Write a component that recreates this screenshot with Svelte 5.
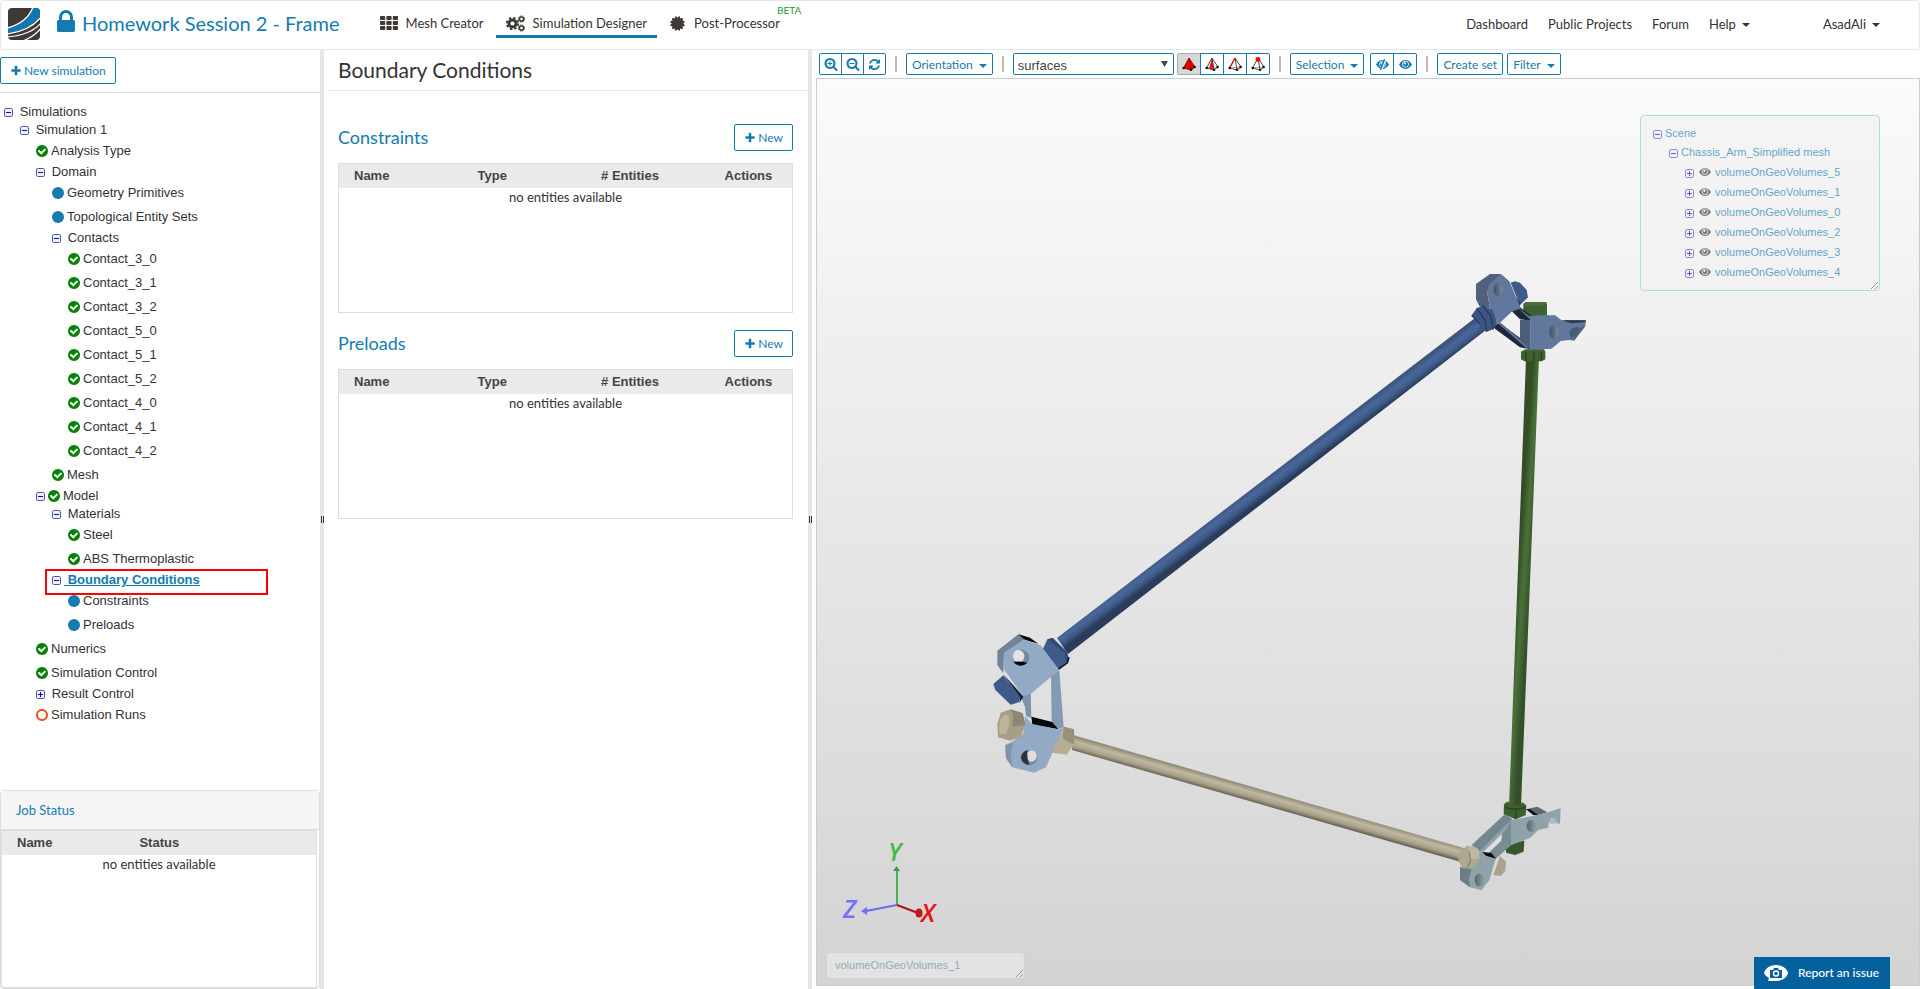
<script lang="ts">
  type Node = {
    label: string;
    toggle?: 'open' | 'closed';
    state?: 'done' | 'info' | 'pending';
    selected?: boolean;
    children?: Node[];
  };

  const done = (label: string): Node => ({ label, state: 'done' });
  const info = (label: string): Node => ({ label, state: 'info' });

  const tree: Node[] = [
    { label: 'Simulations', toggle: 'open', children: [
      { label: 'Simulation 1', toggle: 'open', children: [
        done('Analysis Type'),
        { label: 'Domain', toggle: 'open', children: [
          info('Geometry Primitives'),
          info('Topological Entity Sets'),
          { label: 'Contacts', toggle: 'open', children: [
            '3_0', '3_1', '3_2', '5_0', '5_1', '5_2', '4_0', '4_1', '4_2',
          ].map((id) => done(`Contact_${id}`)) },
          done('Mesh'),
        ] },
        { label: 'Model', toggle: 'open', state: 'done', children: [
          { label: 'Materials', toggle: 'open', children: [done('Steel'), done('ABS Thermoplastic')] },
          { label: 'Boundary Conditions', toggle: 'open', selected: true, children: [info('Constraints'), info('Preloads')] },
        ] },
        done('Numerics'),
        done('Simulation Control'),
        { label: 'Result Control', toggle: 'closed' },
        { label: 'Simulation Runs', state: 'pending' },
      ] },
    ] },
  ];

  const sections = ['Constraints', 'Preloads'];
  const volumes = [5, 1, 0, 2, 3, 4];

  let pickMode = $state('surfaces');

  // 1792-unit icon outlines
  const ICONS = {
    plus: 'M1600 736v192q0 40-28 68t-68 28h-416v416q0 40-28 68t-68 28h-192q-40 0-68-28t-28-68v-416h-416q-40 0-68-28t-28-68v-192q0-40 28-68t68-28h416v-416q0-40 28-68t68-28h192q40 0 68 28t28 68v416h416q40 0 68 28t28 68z',
    check: 'M1412 734q0-28-18-46l-91-90q-19-19-45-19t-45 19l-408 407-226-226q-19-19-45-19t-45 19l-91 90q-18 18-18 46 0 27 18 45l362 362q19 19 45 19 27 0 46-19l543-543q18-18 18-45zm252 162q0 209-103 385.5t-279.5 279.5-385.5 103-385.5-103-279.5-279.5-103-385.5 103-385.5 279.5-279.5 385.5-103 385.5 103 279.5 279.5 103 385.5z',
    lock: 'M640 768h512v-192q0-106-75-181t-181-75-181 75-75 181v192zm832 96v576q0 40-28 68t-68 28h-960q-40 0-68-28t-28-68v-576q0-40 28-68t68-28h32v-192q0-184 132-316t316-132 316 132 132 316v192h32q40 0 68 28t28 68z',
    refresh: 'M1639 1056q0 5-1 7-64 268-268 434.5t-478 166.5q-146 0-282.5-55t-243.5-157l-129 129q-19 19-45 19t-45-19-19-45v-448q0-26 19-45t45-19h448q26 0 45 19t19 45-19 45l-137 137q71 66 161 102t187 36q134 0 250-65t186-179q11-17 53-117 8-23 30-23h192q13 0 22.5 9.5t9.5 22.5zm25-800v448q0 26-19 45t-45 19h-448q-26 0-45-19t-19-45 19-45l138-138q-148-137-349-137-134 0-250 65t-186 179q-11 17-53 117-8 23-30 23h-199q-13 0-22.5-9.5t-9.5-22.5v-7q65-268 270-434.5t480-166.5q146 0 284 55.5t245 156.5l130-129q19-19 45-19t45 19 19 45z',
    zoomIn: 'M1088 800v64q0 13-9.5 22.5t-22.5 9.5h-224v224q0 13-9.5 22.5t-22.5 9.5h-64q-13 0-22.5-9.5t-9.5-22.5v-224h-224q-13 0-22.5-9.5t-9.5-22.5v-64q0-13 9.5-22.5t22.5-9.5h224v-224q0-13 9.5-22.5t22.5-9.5h64q13 0 22.5 9.5t9.5 22.5v224h224q13 0 22.5 9.5t9.5 22.5zm128 32q0-185-131.5-316.5t-316.5-131.5-316.5 131.5-131.5 316.5 131.5 316.5 316.5 131.5 316.5-131.5 131.5-316.5zm512 832q0 53-37.5 90.5t-90.5 37.5q-54 0-90-38l-343-342q-179 124-399 124-143 0-273.5-55.5t-225-150-150-225-55.5-273.5 55.5-273.5 150-225 225-150 273.5-55.5 273.5 55.5 225 150 150 225 55.5 273.5q0 220-124 399l343 343q37 37 37 90z',
    zoomOut: 'M1088 800v64q0 13-9.5 22.5t-22.5 9.5h-576q-13 0-22.5-9.5t-9.5-22.5v-64q0-13 9.5-22.5t22.5-9.5h576q13 0 22.5 9.5t9.5 22.5zm128 32q0-185-131.5-316.5t-316.5-131.5-316.5 131.5-131.5 316.5 131.5 316.5 316.5 131.5 316.5-131.5 131.5-316.5zm512 832q0 53-37.5 90.5t-90.5 37.5q-54 0-90-38l-343-342q-179 124-399 124-143 0-273.5-55.5t-225-150-150-225-55.5-273.5 55.5-273.5 150-225 225-150 273.5-55.5 273.5 55.5 225 150 150 225 55.5 273.5q0 220-124 399l343 343q37 37 37 90z',
    burst: 'M1504 896l138 135q30 28 20 70-12 41-52 51l-188 48 53 186q12 41-19 70-29 31-70 19l-186-53-48 188q-10 40-51 52-12 2-19 2-31 0-51-22l-135-138-135 138q-28 30-70 20-41-11-51-52l-48-188-186 53q-41 12-70-19-31-29-19-70l53-186-188-48q-40-10-52-51-10-42 20-70l138-135-138-135q-30-28-20-70 12-41 52-51l188-48-53-186q-12-41 19-70 29-31 70-19l186 53 48-188q10-41 51-51 41-12 70 19l135 139 135-139q29-30 70-19 41 10 51 51l48 188 186-53q41-12 70 19 31 29 19 70l-53 186 188 48q40 10 52 51 10 42-20 70z',
  };
</script>

{#snippet icon(name: keyof typeof ICONS, size: number)}
  <svg class="icon" width={size} height={size} viewBox="0 0 1792 1792" aria-hidden="true">
    <path d={ICONS[name]} />
  </svg>
{/snippet}

{#snippet eye(width: number, slashed: boolean)}
  <svg class="icon" {width} height={width} viewBox="0 0 14 14" aria-hidden="true">
    <path d="M0 7Q3 2.200 7 2.200T14 7Q11 11.800 7 11.800T0 7z" />
    <circle cx="7" cy="6.700" r="3.300" fill="none" stroke="#fff" stroke-width="0.900" />
    <circle cx="6.300" cy="5.800" r="1.100" fill="#fff" />
    {#if slashed}
      <path d="M10.500 1.500L6 13" stroke="#fff" stroke-width="1.400" />
      <path d="M9.300 1L4.800 13" stroke="currentColor" stroke-width="1.400" />
    {/if}
  </svg>
{/snippet}

{#snippet toggle(kind: string)}
  <svg class="toggle" width="9" height="9" viewBox="0 0 9 9" aria-hidden="true">
    <rect x="0.5" y="0.5" width="8" height="8" rx="1.2" fill="#f0f0f6" stroke="#4a5aae" />
    <path d={kind === 'open' ? 'M2 4.5h5' : 'M2 4.5h5M4.5 2v5'} stroke="#0a0ab0" fill="none" />
  </svg>
{/snippet}

{#snippet branch(nodes: Node[])}
  <ul>
    {#each nodes as n}
      <li>
        <div class="node" class:folder={n.toggle}>
          {#if n.toggle}{@render toggle(n.toggle)}{/if}
          {#if n.state}
            <svg class="state {n.state}" width="12" height="12" viewBox="128 128 1536 1536" aria-hidden="true">
              {#if n.state === 'done'}
                <path d={ICONS.check} />
              {:else if n.state === 'info'}
                <circle cx="896" cy="896" r="768" />
              {:else}
                <circle cx="896" cy="896" r="640" />
              {/if}
            </svg>
          {/if}
          <a href="#tree" class:selected={n.selected}>{#if n.toggle && !n.state}&nbsp;{/if}{n.label}</a>
          {#if n.selected}<span class="mark"></span>{/if}
        </div>
        {#if n.children}{@render branch(n.children)}{/if}
      </li>
    {/each}
  </ul>
{/snippet}

{#snippet caret()}
  <svg class="caret" width="8" height="4" viewBox="0 0 8 4" aria-hidden="true"><path d="M0 0h8L4 4z" /></svg>
{/snippet}

{#snippet tetra(kind: string)}
  <svg width="14" height="14" viewBox="0 0 14 14" aria-hidden="true">
    {#if kind === 'volume'}
      <path d="M7 1L1.500 11l8 2 3.500-3z" fill="#e80000" />
    {:else if kind === 'face'}
      <path d="M7 1L4 11.500l5 1.500z" fill="#f00" />
    {/if}
    <path d="M7 1L1.500 11l7.500 2 4-3zM7 1l2 12" fill="none" stroke={kind === 'volume' ? '#900' : '#333'} stroke-width="0.900" />
    {#if kind !== 'volume'}<path d="M1.500 11L13 10" stroke="#777" stroke-width="0.700" />{/if}
    {#if kind === 'edge'}<path d="M7 1L2 10.500" stroke="#e00" stroke-width="1.200" />{/if}
    {#if kind === 'vertex'}<circle cx="7" cy="2.500" r="2.400" fill="#f00" />{/if}
    <g fill="#111"><circle cx="1.700" cy="11" r="1.300" /><circle cx="9" cy="12.700" r="1.300" /><circle cx="12.600" cy="10" r="1.300" /></g>
  </svg>
{/snippet}

<div class="app">
  <header>
    <svg class="logo" width="32" height="32" viewBox="0 0 32 32" aria-hidden="true">
      <clipPath id="logo-clip"><rect width="32" height="32" rx="4" /></clipPath>
      <g clip-path="url(#logo-clip)">
        <rect width="32" height="32" fill="#3e3935" />
        <path d="M25 -1Q20 15 -1 20L-1 27Q24 21 33 7L33 -1z" fill="#1277b0" />
        <g fill="none" stroke="#fff" stroke-width="1.300">
          <path d="M25 -1Q19 15 -1 20" />
          <path d="M33 9Q22 23 -1 26" />
          <path d="M33 15Q23 27 -1 29" />
          <path d="M33 20Q27 28 15 33" />
        </g>
      </g>
    </svg>
    <span class="lock">{@render icon('lock', 28)}</span>
    <h1>Homework Session 2 - Frame</h1>
    <nav class="steps">
      <a href="#mesh">
        <svg width="18" height="14" viewBox="0 0 18 14" aria-hidden="true">
          {#each [0, 1, 2] as r}
            {#each [0, 1, 2] as c}
              <rect x={c * 6.4} y={r * 5} width="5.200" height="4" rx="0.800" />
            {/each}
          {/each}
        </svg>
        Mesh Creator
      </a>
      <a href="#designer" class="active">
        <svg width="19" height="17" viewBox="0 0 19 17" aria-hidden="true">
          <g fill="none" stroke="#3e3935">
            <circle cx="6.500" cy="8.500" r="3.600" stroke-width="3" />
            <circle cx="6.500" cy="8.500" r="5.700" stroke-width="1.800" stroke-dasharray="2.400 2.080" />
            <circle cx="15.500" cy="4" r="2.100" stroke-width="1.500" />
            <circle cx="15.500" cy="4" r="3.100" stroke-width="1" stroke-dasharray="1.400 1.035" />
            <circle cx="15.500" cy="13" r="2.100" stroke-width="1.500" />
            <circle cx="15.500" cy="13" r="3.100" stroke-width="1" stroke-dasharray="1.400 1.035" />
          </g>
        </svg>
        Simulation Designer
      </a>
      <a href="#post">
        {@render icon('burst', 17)}
        Post-Processor
        <sup>BETA</sup>
      </a>
    </nav>
    <nav class="links">
      <a href="#dashboard">Dashboard</a>
      <a href="#projects">Public Projects</a>
      <a href="#forum">Forum</a>
      <a href="#help">Help {@render caret()}</a>
      <a href="#user" class="user">AsadAli {@render caret()}</a>
    </nav>
  </header>

  <main>
    <aside>
      <div class="actions">
        <button class="btn">{@render icon('plus', 12)} New simulation</button>
      </div>
      <div class="tree">{@render branch(tree)}</div>
      <section class="jobs">
        <h2>Job Status</h2>
        <div class="grid-box">
          <table>
            <thead><tr><th>Name</th><th>Status</th></tr></thead>
            <tbody><tr><td colspan="2">no entities available</td></tr></tbody>
          </table>
        </div>
      </section>
    </aside>

    <div class="splitter"><i></i></div>

    <section class="settings">
      <h2>Boundary Conditions</h2>
      {#each sections as name}
        <div class="block">
          <div class="block-head">
            <h3>{name}</h3>
            <button class="btn">{@render icon('plus', 12)} New</button>
          </div>
          <div class="grid-box">
            <table>
              <thead><tr><th>Name</th><th>Type</th><th># Entities</th><th>Actions</th></tr></thead>
              <tbody><tr><td colspan="4">no entities available</td></tr></tbody>
            </table>
          </div>
        </div>
      {/each}
    </section>

    <div class="splitter"><i></i></div>

    <section class="viewer">
      <div class="toolbar">
        <div class="group zoom">
          <button aria-label="Zoom in">{@render icon('zoomIn', 14)}</button>
          <button aria-label="Zoom out">{@render icon('zoomOut', 14)}</button>
          <button aria-label="Reset view">{@render icon('refresh', 13)}</button>
        </div>
        <span class="sep"></span>
        <button class="menu">Orientation {@render caret()}</button>
        <span class="sep"></span>
        <div class="picker">
          <div class="select">
            <select bind:value={pickMode} aria-label="Pick mode">
              <option>surfaces</option>
              <option>volumes</option>
            </select>
            <svg width="7" height="6" viewBox="0 0 7 6" aria-hidden="true"><path d="M0 0h7L3.500 6z" fill="#444" /></svg>
          </div>
          <div class="group">
            <button class="pressed" aria-label="Volume">{@render tetra('volume')}</button>
            <button aria-label="Face">{@render tetra('face')}</button>
            <button aria-label="Edge">{@render tetra('edge')}</button>
            <button aria-label="Vertex">{@render tetra('vertex')}</button>
          </div>
        </div>
        <span class="sep"></span>
        <button class="menu">Selection {@render caret()}</button>
        <div class="group eyes">
          <button aria-label="Hide">{@render eye(13, true)}</button>
          <button aria-label="Show">{@render eye(13, false)}</button>
        </div>
        <span class="sep"></span>
        <button class="menu">Create set</button>
        <button class="menu last">Filter {@render caret()}</button>
      </div>

      <div class="stage">
        <svg class="model" viewBox="817 79 1102 906" preserveAspectRatio="xMidYMid meet" aria-hidden="true">
          <defs>
            <linearGradient id="rod-blue" gradientUnits="userSpaceOnUse" x1="1266" y1="478" x2="1275" y2="490">
              <stop offset="0" stop-color="#3d5680" /><stop offset="0.350" stop-color="#49689a" /><stop offset="0.650" stop-color="#3f5c8a" /><stop offset="1" stop-color="#2a3c5a" />
            </linearGradient>
            <linearGradient id="rod-green" gradientUnits="userSpaceOnUse" x1="1517" y1="582" x2="1531" y2="583">
              <stop offset="0" stop-color="#324d27" /><stop offset="0.450" stop-color="#4a7239" /><stop offset="1" stop-color="#34502a" />
            </linearGradient>
            <linearGradient id="rod-sand" gradientUnits="userSpaceOnUse" x1="1270" y1="792" x2="1266" y2="806">
              <stop offset="0" stop-color="#8f8a76" /><stop offset="0.350" stop-color="#c0b9a1" /><stop offset="0.700" stop-color="#a8a189" /><stop offset="1" stop-color="#625d4e" />
            </linearGradient>
            <linearGradient id="hole"><stop offset="0" stop-color="#414d60" /><stop offset="1" stop-color="#7c8ca5" /></linearGradient>
            <linearGradient id="hole-gray"><stop offset="0" stop-color="#55646b" /><stop offset="1" stop-color="#8c9ea5" /></linearGradient>
          </defs>

          <polygon points="1057,638 1475,318 1486,330 1068,654" fill="url(#rod-blue)" />
          <polygon points="1526,358 1539,358 1521,806 1509,806" fill="url(#rod-green)" />
          <polygon points="1073,735 1467,849 1461,862 1072,750" fill="url(#rod-sand)" />

          <!-- top joint -->
          <g transform="translate(1440 260) scale(0.33333)">
            <path d="M212 68L225 64L240 68L260 90L264 112L240 135z" fill="#3e5a88" />
            <path d="M215 95L242 130L238 142L225 120z" fill="#263a5a" />
            <path d="M250 132L258 126L318 126L321 133L321 168L275 175L250 158z" fill="#3e6132" />
            <path d="M250 132L258 126L318 126L321 131L310 136L258 137z" fill="#4c703d" />
            <path d="M215 153L238 140L275 168L272 182L240 178z" fill="#1d2737" />
            <path d="M232 142L268 168L330 167L272 180z" fill="#61779c" />
            <path d="M158 200L178 188L245 238L272 268L240 262L170 210z" fill="#1d2737" />
            <path d="M172 188L182 188L268 262L258 264z" fill="#5b7195" />
            <path d="M108 72L150 42L183 42L150 75L142 98L150 145L118 138L108 118z" fill="#50617c" />
            <path d="M146 74L183 42L208 64L243 145L215 155L175 193L150 145L142 98z" fill="#61779c" />
            <ellipse cx="175" cy="89" rx="14" ry="21" fill="url(#hole)" />
            <path d="M95 166L110 145L128 136L158 150L172 190L160 208L140 215L122 205L110 180z" fill="#3b5683" />
            <path d="M110 145L135 180L140 215M128 136L152 168L160 208M95 166L118 190" fill="none" stroke="#253b61" stroke-width="4" />
            <path d="M240 180L272 180L272 268L240 238z" fill="#4d5e7b" />
            <path d="M272 179L290 166L345 166L365 181L437 181L437 195L402 242L388 240L362 243L335 266L272 269z" fill="#61779c" />
            <path d="M365 181L437 181L437 186L395 190z" fill="#2a374d" />
            <path d="M388 218Q394 200 417 200L412 215L395 236z" fill="#48597a" />
            <path d="M402 242L437 197L415 205L402 222z" fill="#50617c" />
            <ellipse cx="342" cy="216" rx="14" ry="21" fill="url(#hole)" />
            <path d="M243 275L256 268L312 268L316 275L316 298L305 304L254 304L243 298z" fill="#3e6131" />
            <path d="M258 276V304M282 278V304M304 276V302" stroke="#28431d" stroke-width="4" />
          </g>

          <!-- left joint -->
          <g transform="translate(970 610) scale(0.33333)">
            <path d="M215 125L232 88L248 84L290 125L297 148L265 180z" fill="#3e5a88" />
            <path d="M232 88L248 84L290 125L297 148L288 158L285 130z" fill="#314a74" />
            <path d="M262 180L292 158L297 142" fill="none" stroke="#101a2b" stroke-width="5" />
            <path d="M82 122L145 73L180 84L165 90L102 130L100 190L82 165z" fill="#6f8499" />
            <path d="M145 73L180 83L205 101L165 90z" fill="#050608" />
            <path d="M150 255L182 248L184 325L168 318L165 290z" fill="#7c93ac" />
            <path d="M243 198L268 180L281 352L263 357L245 332z" fill="#839ab4" />
            <path d="M102 128L162 88L212 106L268 180L182 252L158 258L102 178z" fill="#93aac4" />
            <ellipse cx="153" cy="143" rx="25" ry="24" fill="#7388a0" />
            <ellipse cx="146" cy="139" rx="17" ry="19" fill="#e3e3e3" />
            <path d="M130 156Q145 152 172 158Q155 174 137 162z" fill="#07090c" />
            <path d="M70 222L100 196L152 258L146 277L122 284L76 240z" fill="#3e5a88" />
            <path d="M100 192L160 260L148 280L150 260z" fill="#152137" />
            <path d="M184 320L247 336L265 358L187 344z" fill="#050608" />
            <path d="M165 318L187 342L265 358L280 352L265 390L228 472L193 488L127 472L108 445L106 405L130 392L160 370z" fill="#93aac4" />
            <path d="M106 405L130 400L122 430L127 472L108 445z" fill="#7e94ac" />
            <ellipse cx="177" cy="443" rx="25" ry="23" fill="#7388a0" />
            <ellipse cx="185" cy="438" rx="15" ry="17" fill="#dedede" />
            <path d="M153 445Q155 425 172 421Q170 445 178 465Q158 462 153 445z" fill="#2a323c" />
            <path d="M82 342L92 308L122 298L158 310L166 345L152 380L120 392L84 382z" fill="#a69f88" />
            <path d="M88 338Q98 308 116 316Q124 340 108 372L88 372z" fill="#bcb59c" />
            <path d="M122 298L158 310L166 345L128 350L130 316z" fill="#8d8773" />
            <path d="M281 350L312 358L313 402L290 434L246 428L268 380z" fill="#b5ae95" />
            <path d="M281 350L312 358L313 402L300 400L278 385z" fill="#989179" />
          </g>

          <!-- bottom joint -->
          <g transform="translate(1430 780) scale(0.33333)">
            <path d="M228 205L243 190L283 182L281 215L255 225L228 218z" fill="#37582b" />
            <path d="M190 285L210 228L228 245L226 272L212 288z" fill="#aaa38b" />
            <path d="M288 88L322 80L352 97L322 106z" fill="#5b6b71" />
            <path d="M288 88L300 88L325 106L310 105z" fill="#050608" />
            <path d="M125 195L225 102L248 118L150 215z" fill="#73878e" />
            <path d="M243 120L290 112L350 98L392 84L390 131L380 130Q376 110 364 114L356 128L355 143L325 150L300 174L243 196z" fill="#90a3aa" />
            <path d="M356 128L364 114Q376 110 380 130L366 132z" fill="#a9babf" />
            <path d="M243 120L216 162L214 182L172 222L197 237L243 196z" fill="#788c93" />
            <path d="M150 213L243 120L216 162L160 215z" fill="#90a3aa" />
            <path d="M162 215L214 164L213 180L173 221z" fill="#dedede" />
            <path d="M130 262L150 210L197 237L178 300L155 331L120 322L90 300L90 262z" fill="#90a3aa" />
            <path d="M90 262L125 268L117 295L120 322L90 300z" fill="#6b7e86" />
            <path d="M157 216L184 219L198 236L168 227z" fill="#050608" />
            <ellipse cx="304" cy="138" rx="14" ry="18" fill="url(#hole-gray)" />
            <ellipse cx="148" cy="300" rx="14" ry="19" fill="url(#hole-gray)" />
            <path d="M222 72L234 64L240 72L272 76L276 66L289 76L287 106L256 118L221 102z" fill="#3d6030" />
            <path d="M226 82Q255 92 286 82M258 88V116" fill="none" stroke="#29451e" stroke-width="4" />
            <path d="M85 218L112 197L142 204L150 234L137 260L98 265L86 245z" fill="#aea78f" />
            <path d="M112 197L142 204L150 234L122 240L118 215z" fill="#c0b9a0" />
            <path d="M118 215L122 240L112 264" fill="none" stroke="#8d8773" stroke-width="4" />
          </g>

          <!-- orientation triad -->
          <g fill="none" stroke-width="2">
            <path d="M897 905V870" stroke="#4cae4c" />
            <path d="M897 905L866 911" stroke="#6a6af0" />
            <path d="M897 905L918 913" stroke="#b01515" />
          </g>
          <path d="M893 871L896.500 866L900 871z" fill="#3f9a45" />
          <path d="M861 911L867 907V915z" fill="#6f6ff5" />
          <ellipse cx="919" cy="913" rx="3.500" ry="4.500" fill="#c01616" />
          <g class="axes">
            <text x="888" y="861" fill="#46b946">Y</text>
            <text x="843" y="918" fill="#7272f8">Z</text>
            <text x="921" y="922" fill="#e51818">X</text>
          </g>
        </svg>

        <div class="scene">
          <div class="scene-row root">{@render toggle('open')}<a href="#scene">Scene</a></div>
          <div class="scene-row mesh">{@render toggle('open')}<a href="#scene">Chassis_Arm_Simplified mesh</a></div>
          {#each volumes as v}
            <div class="scene-row volume">
              {@render toggle('closed')}
              <span class="eye">{@render eye(12, false)}</span>
              <a href="#scene">volumeOnGeoVolumes_{v}</a>
            </div>
          {/each}
        </div>

        <textarea class="picked" readonly rows="1" aria-label="Picked entity">volumeOnGeoVolumes_1</textarea>
      </div>
    </section>
  </main>

  <button class="report">
    <svg width="24" height="18" viewBox="0 0 24 18" aria-hidden="true">
      <path d="M12 1C19 1 23 5 24 9C23 13 19 17 12 17L4 17L5 14Q1 12 0 9C1 5 5 1 12 1z" fill="#fff" />
      <path d="M6 6h3l1-2h4l1 2h3v8H6z" fill="#05619e" />
      <circle cx="12" cy="9.500" r="2.500" fill="none" stroke="#fff" stroke-width="1.500" />
    </svg>
    Report an issue
  </button>
</div>

<style>
  :global(body) { margin: 0; background: #fff; }

  .app {
    display: flex;
    flex-direction: column;
    height: 100vh;
    overflow: hidden;
    font: 13px/18px Lato, sans-serif;
    color: #333;
  }

  a { color: inherit; text-decoration: none; }
  h1, h2, h3 { margin: 0; font-weight: 400; }
  button { font: inherit; cursor: pointer; }
  .icon { display: block; fill: currentColor; flex-shrink: 0; }
  .caret { fill: currentColor; flex-shrink: 0; margin-top: 2px; }

  header {
    display: flex;
    align-items: center;
    box-sizing: border-box;
    height: 50px;
    flex-shrink: 0;
    border: 1px solid #e7e7e7;
    border-radius: 4px;
    padding-left: 7px;
    padding-bottom: 2px;
  }

  .lock { color: #147bb0; margin: 0 2px 4px 12px; }
  h1 { padding-bottom: 2px; font-size: 20px; line-height: 24px; color: #147bb0; }

  .steps { display: flex; margin-left: 30px; gap: 2px; height: 37px; align-self: flex-start; }
  .steps a {
    position: relative;
    display: flex;
    align-items: center;
    gap: 8px;
    padding: 10px 10px 0;
    border-bottom: 3px solid transparent;
    fill: #3e3935;
    color: #333;
  }
  .steps a.active { border-color: #147bb0; }
  .steps .icon { color: #3e3935; }
  .steps sup { position: absolute; top: 4px; left: 118px; font-size: 10px; line-height: 10px; color: #1e9632; }

  .links { display: flex; margin-left: auto; gap: 20px; padding-right: 39px; }
  .links a { display: flex; align-items: center; gap: 6px; }
  .user { margin-left: 53px; }

  main { display: flex; flex: 1; min-height: 0; }

  aside { display: flex; flex-direction: column; width: 320px; flex-shrink: 0; }
  .actions { padding: 7px 0 8px; border-bottom: 1px solid #ddd; }

  .btn {
    display: flex;
    align-items: center;
    gap: 2px;
    height: 27px;
    padding: 0 9px;
    font-size: 12px;
    color: #147bb0;
    background: #fff;
    border: 1px solid #147bb0;
    border-radius: 2px;
  }

  .tree { flex: 1; min-height: 0; padding-top: 10px; font: 13px/18px "Liberation Sans", Arial, sans-serif; }
  .tree ul { list-style: none; margin: 0; padding: 0 0 0 16px; }
  .tree > ul { padding-left: 4px; }
  .node { position: relative; display: flex; align-items: center; height: 24px; white-space: nowrap; }
  .node.folder { height: 18px; }
  .node .toggle { margin-right: 3px; flex-shrink: 0; }
  .node.folder .toggle { margin-top: 1px; }
  .state { margin: 0 3px 1px 0; flex-shrink: 0; }
  .done { fill: #078207; }
  .info { fill: #147bb0; }
  .pending { fill: none; stroke: #e2531f; stroke-width: 260; }
  .selected { font-weight: 700; color: #147bb0; text-decoration: underline; }
  .mark {
    position: absolute;
    left: -7px;
    top: -2px;
    width: 219px;
    height: 22px;
    border: 2px solid #f00;
  }

  .jobs {
    display: flex;
    flex-direction: column;
    box-sizing: border-box;
    height: 199px;
    border: 1px solid #ddd;
    border-radius: 4px;
  }
  .jobs h2 {
    padding: 10px 15px;
    font-size: 13px;
    color: #147bb0;
    background: #f5f5f5;
    border-bottom: 1px solid #ddd;
  }
  .jobs .grid-box { flex: 1; margin-right: 2px; height: auto; }
  .jobs th:first-child { width: 39%; }

  .grid-box { box-sizing: border-box; height: 150px; border: 1px solid #ddd; }
  table { width: 100%; border-collapse: collapse; table-layout: fixed; }
  th {
    box-sizing: border-box;
    height: 24px;
    padding: 0 0 0 15px;
    text-align: left;
    font: bold 13px/18px "Liberation Sans", Arial, sans-serif;
    color: #444;
    background: #eaeaea;
  }
  td { padding: 0; text-align: center; }
  .settings th { width: calc(300% / 11); }
  .settings th:last-child { width: auto; }

  .splitter {
    display: flex;
    align-items: center;
    justify-content: flex-end;
    width: 4px;
    flex-shrink: 0;
    background: #e6e6e6;
  }
  .splitter i { width: 1px; height: 7px; border: solid #333; border-width: 0 1px; }

  .settings { width: 484px; flex-shrink: 0; }
  .settings h2 {
    margin-left: 4px;
    padding: 5px 10px;
    font-size: 21px;
    line-height: 30px;
    border-bottom: 1px solid #e7e7e7;
  }
  .block { padding: 0 15px 0 14px; margin-bottom: 17px; }
  .settings h2 + .block { margin-top: 33px; }
  .block-head { display: flex; align-items: center; justify-content: space-between; margin-bottom: 12px; }
  h3 { padding-bottom: 2px; font-size: 18px; line-height: 24px; color: #147bb0; }

  .viewer { display: flex; flex-direction: column; flex: 1; min-width: 0; padding: 3px 0 3px 4px; }

  .toolbar { display: flex; align-items: center; height: 22px; margin: 0 0 3px 3px; font-size: 12px; }
  .toolbar button {
    display: flex;
    align-items: center;
    justify-content: center;
    gap: 6px;
    box-sizing: border-box;
    height: 22px;
    padding: 1px 5px 0;
    color: #147bb0;
    background: #fff;
    border: 1px solid #147bb0;
    border-radius: 2px;
    white-space: nowrap;
  }
  .group { display: flex; }
  .toolbar .group button { width: 24px; padding: 0; margin-right: -1px; border-radius: 0; }
  .toolbar .zoom button { width: 23px; }
  .toolbar .group button:first-child { border-radius: 2px 0 0 2px; }
  .toolbar .group button:last-child { margin-right: 0; border-radius: 0 2px 2px 0; }
  .toolbar .pressed { background: #d8d8d8; border-color: #aaa; }
  .sep { width: 2px; height: 16px; margin: 0 9px; background: #c0b8b0; }
  .picker { display: flex; gap: 3px; }
  .select { position: relative; }
  .select svg { position: absolute; right: 6px; top: 8px; pointer-events: none; }
  .toolbar select {
    display: block;
    appearance: none;
    box-sizing: border-box;
    width: 161px;
    height: 22px;
    padding: 2px 0 0 4px;
    font: 13px "Liberation Sans", Arial, sans-serif;
    color: #444;
    background: #fff;
    border: 1px solid #147bb0;
    border-radius: 2px;
  }
  .eyes { margin-left: 6px; }
  .last { margin-left: 4px; }

  .stage {
    position: relative;
    flex: 1;
    min-height: 0;
    border: 1px solid #ccc;
    background: linear-gradient(#fbfbfb, #d3d3d3);
  }
  .model { position: absolute; inset: 0; width: 100%; height: 100%; }
  .axes { font: italic 600 25px "Open Sans", sans-serif; }

  .scene {
    position: absolute;
    top: 36px;
    right: 39px;
    box-sizing: border-box;
    width: 240px;
    height: 176px;
    padding: 8px 12px;
    overflow: hidden;
    resize: both;
    font: 11px/20px "Liberation Sans", Arial, sans-serif;
    color: #147bb0;
    background: #f2f2f2;
    border: 1px solid #8acbe0;
    border-radius: 4px;
    opacity: 0.66;
  }
  .scene-row { display: flex; align-items: center; height: 20px; }
  .scene-row.root { height: 18px; }
  .scene .toggle { margin: 2px 3px 0 0; }
  .mesh { padding-left: 16px; }
  .volume { padding-left: 32px; }
  .eye { color: #3e3935; margin: 0 4px 0 2px; }

  .picked {
    position: absolute;
    left: 9px;
    bottom: 6px;
    box-sizing: border-box;
    width: 199px;
    height: 27px;
    padding: 5px 8px;
    font: 11px/15px "Liberation Sans", Arial, sans-serif;
    color: #4b86a0;
    background: #f2f2f2;
    border: 1px solid #b4dce8;
    border-radius: 4px;
    opacity: 0.5;
    overflow: hidden;
  }

  .report {
    position: fixed;
    right: 30px;
    bottom: 0;
    display: flex;
    align-items: center;
    gap: 10px;
    height: 32px;
    padding: 0 11px 0 10px;
    font-size: 12px;
    font-weight: 500;
    color: #fff;
    background: #05619e;
    border: 0;
  }
</style>
